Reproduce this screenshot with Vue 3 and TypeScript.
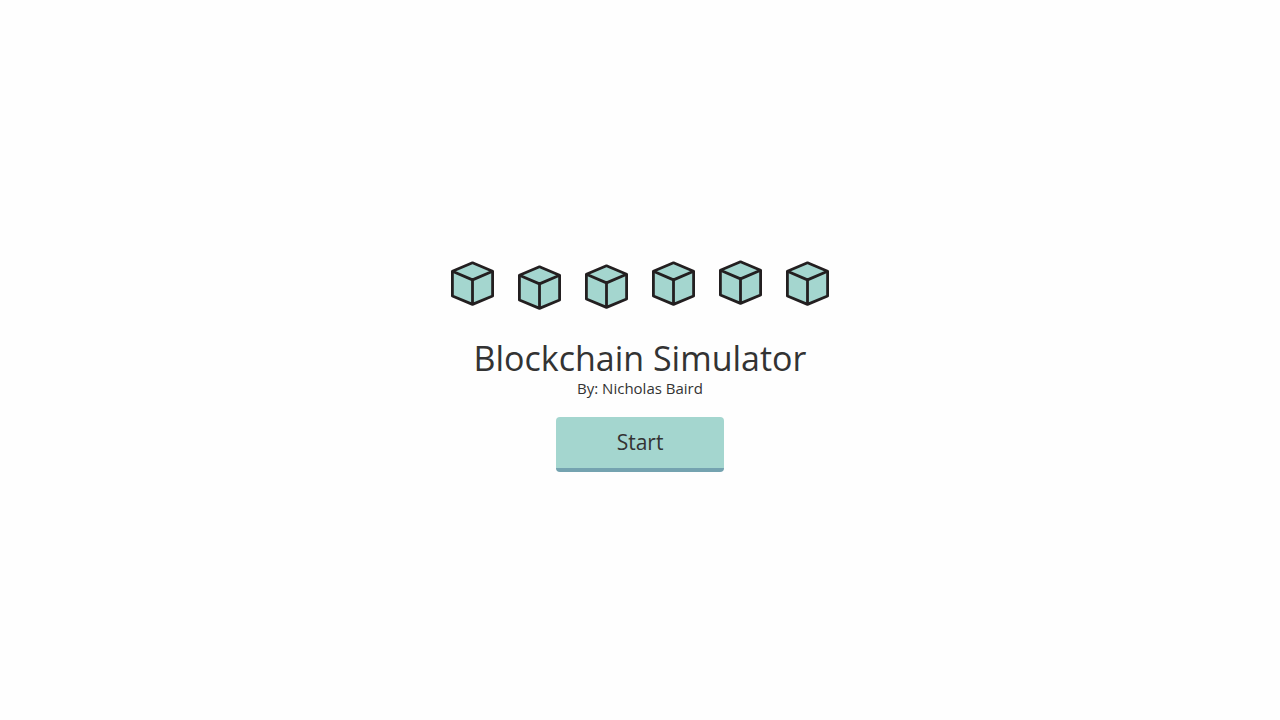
<script setup lang="ts">
import { ref } from 'vue'

interface Block {
  id: number
  bob: number
}

const blocks = ref<Block[]>([
  { id: 1, bob: 0 },
  { id: 2, bob: 4 },
  { id: 3, bob: 3 },
  { id: 4, bob: 0 },
  { id: 5, bob: -1 },
  { id: 6, bob: 0 },
])
</script>

<template>
  <main class="intro">
    <div class="chain" aria-hidden="true">
      <svg
        v-for="block in blocks"
        :key="block.id"
        class="block"
        :style="{ transform: `translateY(${block.bob}px)` }"
        viewBox="0 0 45 48"
      >
        <path class="face" d="M22.5 2.8 42.6 11.2V36L22.5 44.4 2.4 36V11.2Z" />
        <path class="edge" d="M2.4 11.2 22.5 19.9 42.6 11.2M22.5 19.9V44.4" />
      </svg>
    </div>
    <h1 class="title">Blockchain Simulator</h1>
    <p class="author">By: Nicholas Baird</p>
    <button class="start" type="button">Start</button>
  </main>
</template>

<style>
body {
  background: #fefefe;
}
</style>

<style scoped>
.intro {
  box-sizing: border-box;
  min-height: 100vh;
  padding-top: 12px;
  display: flex;
  flex-direction: column;
  align-items: center;
  justify-content: center;
  color: #333;
  font-family: "Segoe UI", "Open Sans", "Noto Sans", sans-serif;
}

.chain {
  display: flex;
  gap: 22px;
  margin-bottom: 30px;
}

.block {
  width: 45px;
  height: 48px;
}

.face,
.edge {
  stroke: #231f20;
  stroke-width: 2.8;
  stroke-linejoin: round;
}

.face {
  fill: #a4d6cf;
}

.edge {
  fill: none;
}

.title {
  margin: 0;
  font-size: 34px;
  font-weight: 400;
  line-height: 40px;
}

.author {
  margin: 0 0 19px;
  font-size: 15px;
  line-height: 20px;
}

.start {
  width: 168px;
  height: 55px;
  padding: 0 0 1px;
  border: 0;
  border-bottom: 4px solid #74a3b0;
  border-radius: 4px;
  background: #a4d6cf;
  color: #333;
  font-family: inherit;
  font-size: 21px;
  line-height: 28px;
  cursor: pointer;
}
</style>
